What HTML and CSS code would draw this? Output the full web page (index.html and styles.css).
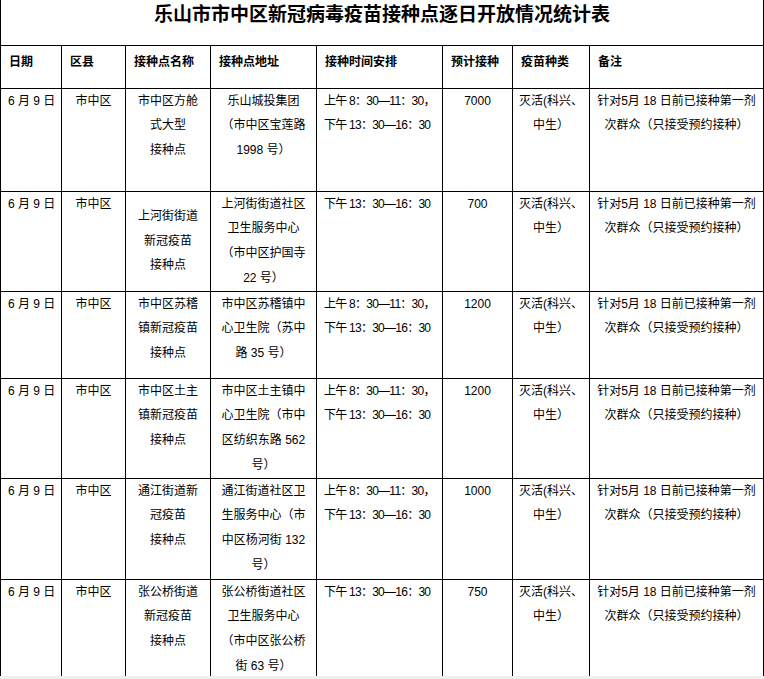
FILE: index.html
```html
<!DOCTYPE html>
<html lang="zh-CN">
<head>
<meta charset="utf-8">
<title>乐山市市中区新冠病毒疫苗接种点逐日开放情况统计表</title>
<link rel="stylesheet" href="styles.css">
</head>
<body>
<div class="page">
<table class="sheet">
  <colgroup>
    <col class="c1"><col class="c2"><col class="c3"><col class="c4"><col class="c5"><col class="c6"><col class="c7"><col class="c8">
  </colgroup>
  <tr class="r-title"><td class="title" colspan="8">乐山市市中区新冠病毒疫苗接种点逐日开放情况统计表</td></tr>
  <tr class="r-head">
    <th>日期</th><th>区县</th><th>接种点名称</th><th>接种点地址</th><th>接种时间安排</th><th>预计接种</th><th>疫苗种类</th><th>备注</th>
  </tr>
  <tr class="r1">
    <td class="date">6 月 9 日</td>
    <td class="ctr">市中区</td>
    <td class="ctr">市中区方舱<br>式大型<br>接种点</td>
    <td class="ctr">乐山城投集团<br>（市中区宝莲路<br>1998 号）</td>
    <td class="time">上午 8：30—11：30，<br>下午 13：30—16：30</td>
    <td class="ctr">7000</td>
    <td class="ctr">灭活(科兴、<br>中生）</td>
    <td class="ctr">针对5月 18 日前已接种第一剂<br>次群众（只接受预约接种）</td>
  </tr>
  <tr class="r2">
    <td class="date">6 月 9 日</td>
    <td class="ctr">市中区</td>
    <td class="ctr mid">上河街街道<br>新冠疫苗<br>接种点</td>
    <td class="ctr">上河街街道社区<br>卫生服务中心<br>（市中区护国寺<br>22 号）</td>
    <td class="time">下午 13：30—16：30</td>
    <td class="ctr">700</td>
    <td class="ctr">灭活(科兴、<br>中生）</td>
    <td class="ctr">针对5月 18 日前已接种第一剂<br>次群众（只接受预约接种）</td>
  </tr>
  <tr class="r3">
    <td class="date">6 月 9 日</td>
    <td class="ctr">市中区</td>
    <td class="ctr">市中区苏稽<br>镇新冠疫苗<br>接种点</td>
    <td class="ctr">市中区苏稽镇中<br>心卫生院（苏中<br>路 35 号）</td>
    <td class="time">上午 8：30—11：30，<br>下午 13：30—16：30</td>
    <td class="ctr">1200</td>
    <td class="ctr">灭活(科兴、<br>中生）</td>
    <td class="ctr">针对5月 18 日前已接种第一剂<br>次群众（只接受预约接种）</td>
  </tr>
  <tr class="r4">
    <td class="date">6 月 9 日</td>
    <td class="ctr">市中区</td>
    <td class="ctr">市中区土主<br>镇新冠疫苗<br>接种点</td>
    <td class="ctr">市中区土主镇中<br>心卫生院（市中<br>区纺织东路 562<br>号）</td>
    <td class="time">上午 8：30—11：30，<br>下午 13：30—16：30</td>
    <td class="ctr">1200</td>
    <td class="ctr">灭活(科兴、<br>中生）</td>
    <td class="ctr">针对5月 18 日前已接种第一剂<br>次群众（只接受预约接种）</td>
  </tr>
  <tr class="r5">
    <td class="date">6 月 9 日</td>
    <td class="ctr">市中区</td>
    <td class="ctr">通江街道新<br>冠疫苗<br>接种点</td>
    <td class="ctr">通江街道社区卫<br>生服务中心（市<br>中区杨河街 132<br>号）</td>
    <td class="time">上午 8：30—11：30，<br>下午 13：30—16：30</td>
    <td class="ctr">1000</td>
    <td class="ctr">灭活(科兴、<br>中生）</td>
    <td class="ctr">针对5月 18 日前已接种第一剂<br>次群众（只接受预约接种）</td>
  </tr>
  <tr class="r6">
    <td class="date">6 月 9 日</td>
    <td class="ctr">市中区</td>
    <td class="ctr">张公桥街道<br>新冠疫苗<br>接种点</td>
    <td class="ctr">张公桥街道社区<br>卫生服务中心<br>（市中区张公桥<br>街 63 号）</td>
    <td class="time">下午 13：30—16：30</td>
    <td class="ctr">750</td>
    <td class="ctr">灭活(科兴、<br>中生）</td>
    <td class="ctr">针对5月 18 日前已接种第一剂<br>次群众（只接受预约接种）</td>
  </tr>
</table>
</div>
</body>
</html>
```

FILE: styles.css
```css
html {
  background: #efefef;
}
body {
  margin: 0;
  font-family: "Liberation Sans", "Noto Sans CJK SC", sans-serif;
  color: #000;
}
.page {
  height: 676px;
  overflow: hidden;
  background: #fff;
}
.sheet {
  border-collapse: collapse;
  table-layout: fixed;
  width: 763px;
  font-size: 12px;
}
.c1 { width: 61px; }
.c2 { width: 64px; }
.c3 { width: 85px; }
.c4 { width: 106px; }
.c5 { width: 126px; }
.c6 { width: 70px; }
.c7 { width: 77px; }
.c8 { width: 174px; }

.sheet td,
.sheet th {
  border: 1px solid #000;
  padding: 0;
  vertical-align: top;
  line-height: 24.75px;
  white-space: nowrap;
}
.sheet td.title {
  border-top: none;
  text-align: center;
  font-size: 19px;
  font-weight: bold;
  line-height: 26px;
  padding: 0;
  font-family: "Noto Sans CJK SC", sans-serif;
}
.r-title { height: 45px; }
.r-head { height: 43px; }
.r1 { height: 103px; }
.r2 { height: 100px; }
.r3 { height: 87px; }
.r4 { height: 100px; }
.r5 { height: 101px; }
.r6 { height: 101px; }

.sheet th {
  text-align: left;
  font-weight: bold;
  padding: 6px 0 0 8px;
  line-height: 18px;
  font-family: "Noto Sans CJK SC", sans-serif;
}
.sheet td.date {
  padding-left: 7px;
}
.ctr {
  text-align: center;
}
.sheet td.mid {
  vertical-align: middle;
}
.sheet td.time {
  padding-left: 7px;
  letter-spacing: -0.75px;
}
```
